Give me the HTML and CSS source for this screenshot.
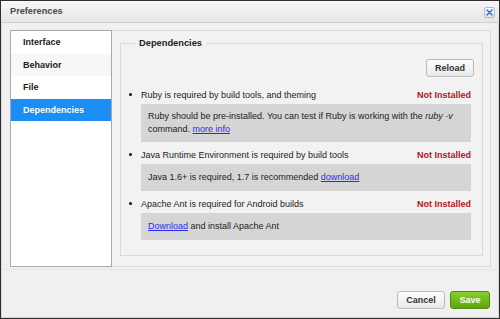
FILE: index.html
```html
<!DOCTYPE html>
<html>
<head>
<meta charset="utf-8">
<link rel="stylesheet" href="styles.css">
</head>
<body>
<div class="window">
  <div class="titlebar">
    <span class="title">Preferences</span>
    <span class="close"><svg width="7" height="7" viewBox="0 0 7 7"><path d="M1 1L6 6M6 1L1 6" stroke="#3f63b5" stroke-width="1.4" stroke-linecap="round"/></svg></span>
  </div>
  <div class="main">
    <ul class="sidebar">
      <li class="item">Interface</li>
      <li class="item alt">Behavior</li>
      <li class="item">File</li>
      <li class="item selected">Dependencies</li>
    </ul>
    <div class="panel">
      <fieldset class="group">
        <legend class="legend">Dependencies</legend>
        <div class="toolbar"><button class="btn">Reload</button></div>
        <div class="dep first">
          <div class="dep-head"><span class="dot"></span><span class="dep-name">Ruby is required by build tools, and theming</span><span class="status">Not Installed</span></div>
          <div class="dep-info">Ruby should be pre-installed. You can test if Ruby is working with the <em>ruby -v</em><br>command. <a href="#">more info</a></div>
        </div>
        <div class="dep">
          <div class="dep-head"><span class="dot"></span><span class="dep-name">Java Runtime Environment is required by build tools</span><span class="status">Not Installed</span></div>
          <div class="dep-info single">Java 1.6+ is required, 1.7 is recommended <a href="#">download</a></div>
        </div>
        <div class="dep">
          <div class="dep-head"><span class="dot"></span><span class="dep-name">Apache Ant is required for Android builds</span><span class="status">Not Installed</span></div>
          <div class="dep-info single"><a href="#">Download</a> and install Apache Ant</div>
        </div>
      </fieldset>
    </div>
  </div>
  <div class="footer">
    <button class="btn cancel">Cancel</button>
    <button class="btn save">Save</button>
  </div>
</div>
</body>
</html>
```

FILE: styles.css
```css
* { box-sizing: border-box; }
html, body { margin: 0; padding: 0; background: #2b2b2b; }
body { font-family: "Liberation Sans", Arial, sans-serif; font-size: 9px; color: #222; }

.window {
  width: 500px;
  height: 319px;
  border: 1px solid #2e2e2e;
  background: #f0f0f0;
  display: flex;
  flex-direction: column;
  box-shadow: inset 0 0 0 1px #d6d6d6;
}

.titlebar {
  height: 22px;
  flex: none;
  display: flex;
  align-items: center;
  justify-content: space-between;
  padding: 0 4px 1px 9px;
  background: linear-gradient(#f6f6f6, #e6e6e6);
  border-bottom: 1px solid #cfcfcf;
}
.title { font-weight: bold; color: #4a4a4a; font-size: 9.2px; }
.close {
  width: 11px;
  height: 11px;
  border: 1px solid #a9bedb;
  border-radius: 2px;
  background: linear-gradient(#f4f8fd, #dde8f6);
  display: flex;
  align-items: center;
  justify-content: center;
  margin-top: 2px;
}
.close svg { display: block; }

.main {
  display: flex;
  padding: 7px 8px 0 9px;
  height: 244px;
  flex: none;
}

.sidebar {
  list-style: none;
  margin: 0;
  padding: 0;
  width: 102px;
  height: 237px;
  background: #fff;
  border: 1px solid #a8a8a8;
  flex: none;
}
.item {
  height: 22.5px;
  line-height: 22.5px;
  padding-left: 12px;
  font-weight: bold;
  color: #222;
}
.item.alt { background: #f7f7f7; }
.item.selected { background: #1a8ef5; color: #fff; }

.panel {
  flex: 1;
  height: 237px;
  border: 1px solid #dadada;
  border-left: none;
  background: #f2f2f2;
  padding: 7px 7px 10px 8px;
  display: flex;
}

.group {
  flex: 1;
  margin: 0;
  padding: 0 11px 0 8px;
  border: 1px solid #d9d9d9;
  min-width: 0;
}
.legend {
  margin-left: 6px;
  padding: 0 4px;
  font-weight: bold;
  font-size: 9.3px;
  color: #222;
  line-height: 11px;
}

.toolbar {
  display: flex;
  justify-content: flex-end;
  margin-top: 10px;
  margin-right: -3px;
}

.btn {
  font-family: "Liberation Sans", Arial, sans-serif;
  font-size: 9px;
  font-weight: bold;
  color: #333;
  height: 18px;
  padding: 0;
  border: 1px solid #b9b9b9;
  border-radius: 3px;
  background: linear-gradient(#fdfdfd, #e9e9e9);
  box-shadow: 0 1px 0 rgba(255,255,255,0.6);
}
.toolbar .btn { width: 48px; }

.dep { margin-top: 6px; }
.dep.first { margin-top: 11px; }
.dep-head {
  display: flex;
  align-items: center;
  height: 13px;
}
.dot {
  width: 3px;
  height: 3px;
  border-radius: 50%;
  background: #111;
  margin: 0 9px 0 0;
  flex: none;
}
.dep-name { flex: 1; color: #222; }
.status { color: #b3121f; font-weight: bold; }

.dep-info {
  margin: 3px 0 0 12px;
  background: #d5d5d5;
  padding: 6px 7px;
  line-height: 13px;
  color: #222;
}
.dep-info.single { padding: 7px 7px; }
.dep-info em { font-style: italic; }
a { color: #2b2bf0; text-decoration: underline; }

.footer {
  flex: 1;
  border-top: 1px solid #e4e4e4;
  margin-top: 2px;
  display: flex;
  justify-content: flex-end;
  align-items: flex-start;
  gap: 5px;
  padding: 21px 9px 0 0;
}
.footer .cancel { width: 48px; }
.footer .save {
  width: 40px;
  color: #fff;
  border-color: #4f8d0d;
  background: linear-gradient(#86cf2c, #5da411);
}
```
